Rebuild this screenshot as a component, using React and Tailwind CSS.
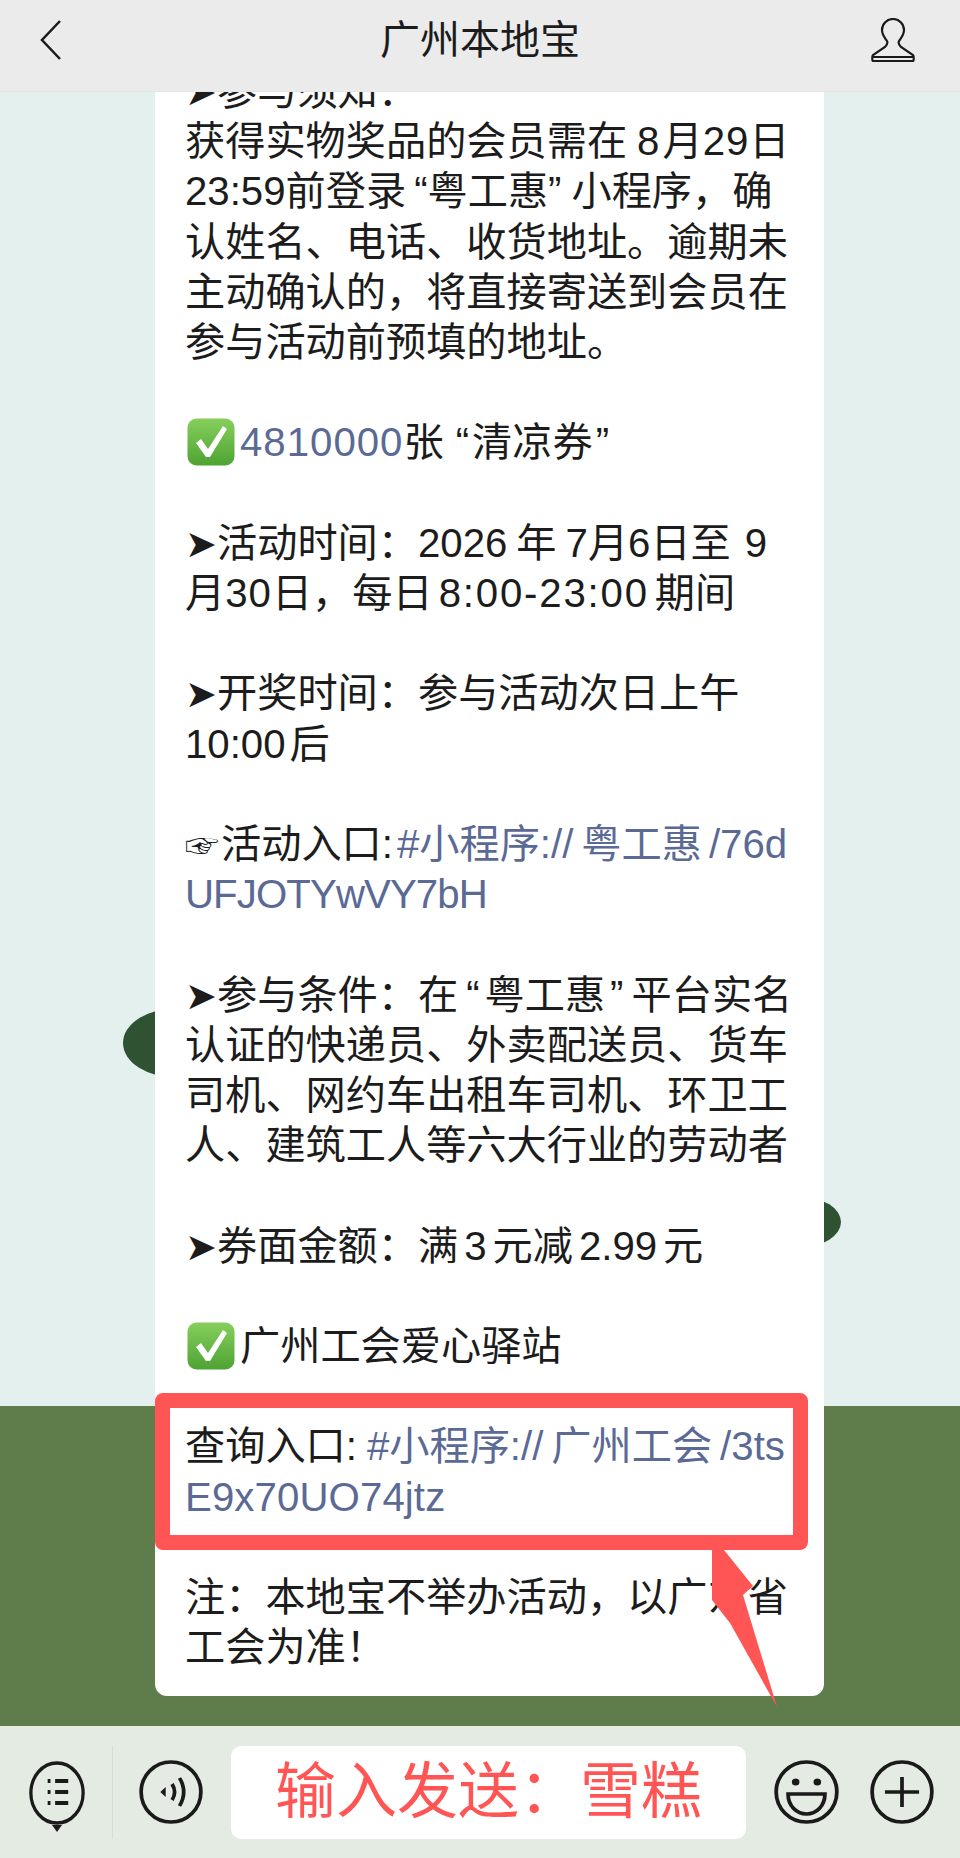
const Link = ({ children, className = "" }) => <span className={"text-[#5b6a95] " + className}>{children}</span>;

const CheckBox = () => (
  <svg viewBox="0 0 48 48" className="w-[48px] h-[48px] ml-[2px] mr-[5px] inline-block align-[-10px]">
    <defs>
      <linearGradient id="chk" x1="0" y1="0" x2="0" y2="1">
        <stop offset="0" stopColor="#86cf5c" />
        <stop offset="1" stopColor="#4ea334" />
      </linearGradient>
    </defs>
    <rect x="0.5" y="0.5" width="47" height="47" rx="9" fill="url(#chk)" />
    <path d="M9 25l5-4 7 10L36 8l4 3-17 28h-4z" fill="#fff" />
  </svg>
);

const Arrow = () => <span className="inline-block w-[32px] text-[38px] leading-none">➤</span>;
const Gap = ({ w = "w-[6px]" }) => <span className={"inline-block " + w} />;

const blocks = [
  [
    <><Arrow />参与须知：</>,
    <>获得实物奖品的会员需在<Gap w="w-[10px]" />8<Gap w="w-[3px]" />月<span className="tracking-[1px]">29</span>日</>,
    <>23:59前登录<Gap w="w-[8px]" />“粤工惠”<Gap w="w-[10px]" />小程序，确</>,
    "认姓名、电话、收货地址。逾期未",
    "主动确认的，将直接寄送到会员在",
    "参与活动前预填的地址。",
  ],
  [<><CheckBox /><Link className="tracking-[1px]">4810000</Link>张<Gap w="w-[12px]" />“<Gap w="w-[3px]" />清凉券<Gap w="w-[3px]" />”</>],
  [
    <><Arrow />活动时间：2026<Gap w="w-[9px]" />年<Gap w="w-[9px]" />7月6日至<Gap w="w-[14px]" />9</>,
    <>月<span className="tracking-[1px]">30</span>日，每日<Gap w="w-[6px]" /><span className="tracking-[1.8px]">8:00-23:00</span><Gap w="w-[6px]" />期间</>,
  ],
  [<><Arrow />开奖时间：参与活动次日上午</>, <>10:00<Gap w="w-[4px]" />后</>],
  [
    <><span className="inline-block w-[36px] text-[34px] leading-none">☞</span>活动入口:<Gap w="w-[4px]" /><Link>#小程序://<Gap w="w-[8px]" />粤工惠<Gap w="w-[7px]" />/76d</Link></>,
    <Link className="tracking-[-0.9px]">UFJOTYwVY7bH</Link>,
  ],
  [
    <><Arrow />参与条件：在<Gap w="w-[8px]" />“<Gap w="w-[5px]" />粤工惠<Gap w="w-[5px]" />”<Gap w="w-[8px]" />平台实名</>,
    "认证的快递员、外卖配送员、货车",
    "司机、网约车出租车司机、环卫工",
    "人、建筑工人等六大行业的劳动者",
  ],
  [<><Arrow />券面金额：满<Gap />3<Gap />元减<Gap />2.99<Gap />元</>],
  [<><CheckBox />广州工会爱心驿站</>],
  [
    <>查询入口:<Gap w="w-[10px]" /><Link>#小程序://<Gap w="w-[8px]" />广州工会<Gap w="w-[8px]" />/3ts</Link></>,
    <Link className="tracking-[0.1px]">E9x70UO74jtz</Link>,
  ],
  ["注：本地宝不举办活动，以广东省", "工会为准！"],
];

const RoundIcon = ({ w, children }) => (
  <svg
    viewBox="0 0 60 64"
    preserveAspectRatio="none"
    style={{ width: w }}
    className="h-[64px] shrink-0"
    fill="none"
    stroke="#1a1a1a"
    strokeWidth="3.5"
  >
    <ellipse cx="30" cy="32" rx="28" ry="30" />
    {children}
  </svg>
);

export default function App() {
  return (
    <div
      className="w-[960px] h-[1858px] flex flex-col overflow-hidden text-[#1c1c1c]"
      style={{ fontFamily: '"Liberation Sans","Noto Sans CJK SC","DejaVu Sans",sans-serif' }}
    >
      <header className="h-[92px] shrink-0 bg-[#ebebeb] grid grid-cols-[1fr_auto_1fr] items-center pl-[40px] pr-[45px] pb-[12px] z-10 border-b border-[#e0e6e4]">
        <svg viewBox="0 0 22 40" className="w-[22px] h-[40px]" fill="none" stroke="#1a1a1a" strokeWidth="2.5">
          <path d="M20 1L2 20l18 19" />
        </svg>
        <h1 className="text-[40px] leading-none font-normal ml-[5px]">广州本地宝</h1>
        <svg viewBox="0 0 44 44" className="w-[44px] h-[44px] justify-self-end" fill="none" stroke="#1a1a1a" strokeWidth="2.2">
          <path d="M22 1c-6 0-11 5-11 11 0 5 3 8 5 11 1 2 0 4-2 6L2 37c-1 1-1 6 0 6h40c1 0 1-5 0-6L30 29c-2-2-3-4-2-6 2-3 5-6 5-11 0-6-5-11-11-11z" />
          <path d="M2 39h40" />
        </svg>
      </header>

      <main className="relative flex-1 overflow-hidden bg-[linear-gradient(#e3f0ee_1314px,#5f7d4a_1314px)]">
        <div className="absolute left-[123px] top-[916px] w-[110px] h-[70px] rounded-[50%] bg-[#2f5233]" />
        <div className="absolute left-[761px] top-[1105px] w-[80px] h-[50px] rounded-[50%] bg-[#2f5233]" />

        <div className="relative ml-[155px] w-[669px] h-[1629px] -mt-[25px] pl-[30px] bg-white rounded-b-[12px] flex flex-col gap-[50.2px] text-[40.2px] leading-[50.2px]">
          {blocks.map((lines, i) => (
            <div key={i}>
              {lines.map((line, j) => (
                <div key={j} className="whitespace-nowrap">{line}</div>
              ))}
            </div>
          ))}
        </div>

        {/* 红框和箭头是截图上的标注 */}
        <div className="absolute left-[155px] top-[1301px] w-[653px] h-[157px] border-[15px] border-[#ff5555] rounded-[8px]" />
        <svg viewBox="0 0 80 160" className="absolute left-[705px] top-[1456px] w-[80px] h-[160px]">
          <polygon points="7,2 19,2 48,38 38,47 72,159 25,75 7,52" fill="#ff5555" />
        </svg>
      </main>

      <footer className="h-[132px] shrink-0 bg-[#e4ebe3] flex items-center pl-[29px] pr-[25px]">
        <div className="relative mr-[27px] pt-[2px]">
          <RoundIcon w="56px">
            <path d="M20 20h3M28 20h14M20 31h3M28 31h14M20 42h3M28 42h14" strokeWidth="4" />
          </RoundIcon>
          <div className="absolute left-[23px] top-[66px] border-x-[5px] border-x-transparent border-t-[7px] border-t-[#1a1a1a]" />
        </div>
        <div className="w-px h-[93px] bg-[#d6ddd5] mr-[26px]" />
        <RoundIcon w="64px">
          <path d="M20 32l5-5v10z" fill="#1a1a1a" stroke="none" />
          <path d="M31 24c3 5 3 11 0 16M38 18c5 9 5 19 0 28" />
        </RoundIcon>
        <div className="ml-[28px] w-[515px] h-[93px] bg-white rounded-[10px] flex items-center justify-center text-[61px] leading-none text-[#ff5555]">
          输入发送：雪糕
        </div>
        <div className="ml-[28px]">
          <RoundIcon w="65px">
            <circle cx="20" cy="22" r="3.5" fill="#1a1a1a" stroke="none" />
            <circle cx="40" cy="22" r="3.5" fill="#1a1a1a" stroke="none" />
            <path d="M13 34h34c0 12-8 20-17 20s-17-8-17-20z" />
          </RoundIcon>
        </div>
        <div className="ml-[31px]">
          <RoundIcon w="64px">
            <path d="M30 17v30M14 32h32" />
          </RoundIcon>
        </div>
      </footer>
    </div>
  );
}
